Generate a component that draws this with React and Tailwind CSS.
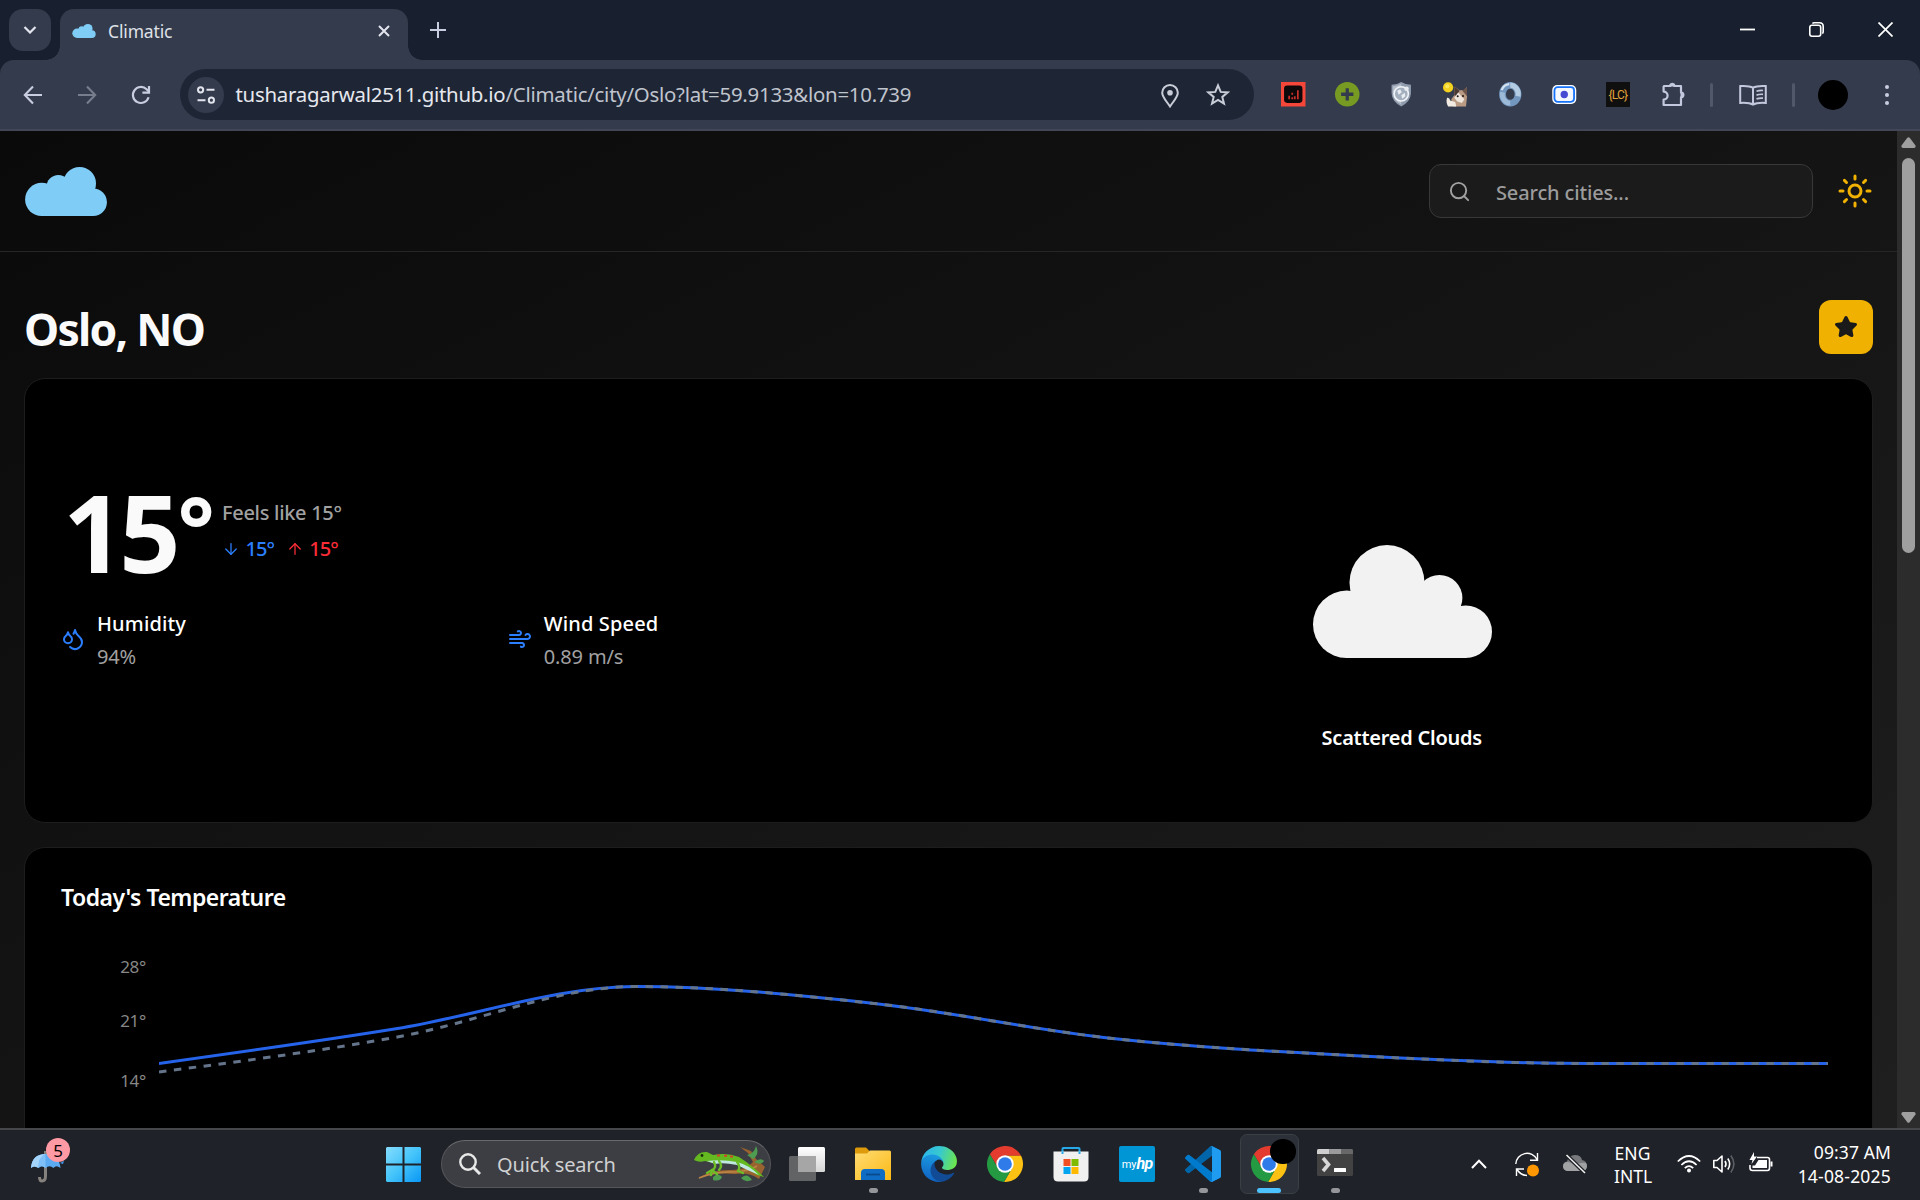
import React from "react";
import { Sun, Search, Star, Droplets, Wind, ArrowDown, ArrowUp } from "lucide-react";

/* ---------- shared drawings ---------- */

function LogoCloud({ className }) {
  return (
    <svg viewBox="0 0 82 49" className={className} fill="#7fcdf7">
      <circle cx="16.7" cy="32.4" r="16.6" />
      <circle cx="33.4" cy="20" r="12" />
      <circle cx="54.6" cy="16.4" r="16.4" />
      <circle cx="68.2" cy="35.3" r="13.7" />
      <rect x="16.7" y="20" width="51.5" height="29" />
    </svg>
  );
}

function ScatteredCloud() {
  return (
    <svg viewBox="0 0 179 113" className="ml-0.5 h-[113px] w-[179px]" fill="#f2f2f2">
      <circle cx="33.7" cy="79.3" r="33.7" />
      <circle cx="74" cy="37.6" r="37.5" />
      <circle cx="126.4" cy="53" r="23" />
      <circle cx="152.7" cy="86.7" r="26.3" />
      <rect x="33.7" y="47" width="90" height="66" />
      <rect x="33.7" y="61" width="119" height="52" />
    </svg>
  );
}

function ChromeLogo({ className }) {
  const wedge = "M24 14 H43.6 A22 22 0 0 0 5.55 12 L15.34 29 A10 10 0 0 1 24 14 Z";
  return (
    <svg viewBox="2 2 44 44" className={className}>
      <path d={wedge} fill="#e33b2e" />
      <path d={wedge} fill="#fdc113" transform="rotate(120 24 24)" />
      <path d={wedge} fill="#249a42" transform="rotate(240 24 24)" />
      <circle cx="24" cy="24" r="10.6" fill="#fff" />
      <circle cx="24" cy="24" r="8.4" fill="#2f7bea" />
    </svg>
  );
}

/* ---------- browser window ---------- */

function TabStrip() {
  return (
    <div className="flex h-[60px] shrink-0 items-start bg-[#18202f] pt-[9px]">
      <div className="ml-[9px] flex h-[42px] w-[42px] items-center justify-center rounded-[14px] bg-[#343b4c]">
        <svg viewBox="0 0 14 8" className="h-2 w-3.5" fill="none" stroke="#e3e5ee" strokeWidth="2.2">
          <path d="M1.5 1 L7 6.5 L12.5 1" />
        </svg>
      </div>
      <div className="relative ml-[9px] flex h-[51px] w-[348px] items-center rounded-t-[14px] bg-[#343b4c] pb-[8px] pl-3">
        <span className="absolute bottom-0 -left-[14px] h-[14px] w-[14px] bg-[radial-gradient(circle_at_0_0,transparent_13.5px,#343b4c_14px)]" />
        <span className="absolute bottom-0 -right-[14px] h-[14px] w-[14px] bg-[radial-gradient(circle_at_100%_0,transparent_13.5px,#343b4c_14px)]" />
        <LogoCloud className="h-[14px] w-6" />
        <span className="ml-3 text-[17.5px] leading-6 tracking-[-0.15px] text-[#dfe1e8]">Climatic</span>
        <svg viewBox="0 0 12 12" className="mr-[18px] ml-auto h-3 w-3" fill="none" stroke="#e3e5ee" strokeWidth="2">
          <path d="M1 1 L11 11 M11 1 L1 11" />
        </svg>
      </div>
      <svg viewBox="0 0 16 16" className="mt-[13px] ml-[22px] h-4 w-4" fill="none" stroke="#c9cde0" strokeWidth="2">
        <path d="M8 0 V16 M0 8 H16" />
      </svg>
      <div className="mt-[13px] mr-[27px] ml-auto flex items-center gap-[54px]">
        <svg viewBox="0 0 15 15" className="h-[15px] w-[15px]" stroke="#fff" strokeWidth="1.8">
          <path d="M0 7.5 H15" />
        </svg>
        <svg viewBox="0 0 15 15" className="h-[15px] w-[15px]" fill="none" stroke="#fff" strokeWidth="1.6">
          <rect x="0.8" y="3.3" width="10.9" height="10.9" rx="2.2" />
          <path d="M3.4 1.5 Q4 0.8 5.4 0.8 H10.5 Q14.2 0.8 14.2 4.5 V9.6 Q14.2 11 13.4 11.6" />
        </svg>
        <svg viewBox="0 0 15 15" className="h-[15px] w-[15px]" stroke="#fff" strokeWidth="1.7">
          <path d="M0.5 0.5 L14.5 14.5 M14.5 0.5 L0.5 14.5" />
        </svg>
      </div>
    </div>
  );
}

function Extensions() {
  return (
    <div className="ml-[27px] flex items-center gap-[29.6px]">
      <svg viewBox="0 0 24 24" className="h-[24.5px] w-[24.5px]">
        <rect width="24" height="24" fill="#f4473a" />
        <rect x="3" y="3.5" width="18" height="17" rx="3" fill="#0d0809" />
        <path d="M8 17 V13.5 M11 17 V15 M11 12.5 V10.5 M13.5 17 V14 M16.5 17 V8" stroke="#c9312c" strokeWidth="1.7" />
      </svg>
      <svg viewBox="0 0 24 24" className="h-[24.5px] w-[24.5px]">
        <circle cx="12" cy="12" r="12" fill="#779b22" />
        <path d="M12 6 V18 M6 12 H18" stroke="#343b4c" strokeWidth="3.2" />
      </svg>
      <svg viewBox="0 0 24 24" className="h-[24.5px] w-[24.5px]">
        <path d="M12 0 Q16 2.6 21.5 2.8 V11 Q21.2 19 12 24 Q2.8 19 2.5 11 V2.8 Q8 2.6 12 0 Z" fill="#8f9bad" />
        <path d="M12 1.6 Q7.6 4 3.8 4.1 V11 Q4.2 18 12 22.4 Z" fill="#b4bdc9" />
        <circle cx="12" cy="11.6" r="7" fill="#a4afbd" stroke="#f2f5f8" strokeWidth="1.5" />
        <path d="M8 8.5 L11 7 L12.5 10 L9.5 12.5 Z M12 13 L15.5 10.5 L16 14 L13 16.5 Z" fill="#e9edf2" />
        <circle cx="17.2" cy="6.6" r="2.2" fill="#e9edf2" />
      </svg>
      <svg viewBox="0 0 24 24" className="h-[24.5px] w-[24.5px]">
        <path d="M10 24 L8 17 L11 13 L11.5 4.5 L16 8 L20.5 8 L23.5 5 V15 L22.5 24 Z" fill="#b99a83" />
        <path d="M11 13 L11.5 4.5 L16 8.5 L14.5 14 Z" fill="#4b3a33" />
        <path d="M19 8.5 L23.5 5 V14 Z" fill="#6d5548" />
        <path d="M15 10 L18 14 L21 17 L18.5 20.5 L14 19 L11 15.5 Z" fill="#efe6de" />
        <path d="M5 24 Q2.5 20 4 15.5 Q6.5 15 7 18 L12 19.5 L13 24 Z" fill="#f1ebe4" />
        <circle cx="14.4" cy="14" r="1" fill="#1b1411" />
        <circle cx="19.6" cy="13.8" r="1" fill="#1b1411" />
        <circle cx="5" cy="5.3" r="5" fill="#f4d21f" />
        <circle cx="4.2" cy="4.2" r="2" fill="#fbe85c" />
      </svg>
      <svg viewBox="0 0 24 24" className="ml-px h-[24.5px] w-[24.5px]" fill="none">
        <ellipse cx="12" cy="12" rx="7.6" ry="8.8" stroke="#7396bf" strokeWidth="6.6" />
        <path d="M12 3.2 A7.6 8.8 0 0 1 19.6 14" stroke="#b3cce4" strokeWidth="5" />
        <path d="M12 20.8 A7.6 8.8 0 0 1 4.400 10" stroke="#9dbbd9" strokeWidth="4.6" />
        <path d="M3.6 8 A8.8 8.8 0 0 1 11 2" stroke="#d3e2f0" strokeWidth="2.2" />
      </svg>
      <svg viewBox="0 0 24 19" className="h-[19px] w-[24.5px]">
        <rect width="24" height="19" rx="5" fill="#fff" />
        <rect x="2.2" y="2.2" width="19.6" height="14.6" rx="3.2" fill="#f5f8ff" stroke="#1672f8" strokeWidth="1.8" />
        <circle cx="12" cy="9.5" r="3.7" fill="#474bd3" />
      </svg>
      <div className="-ml-px flex h-[24.5px] w-[24.5px] items-center justify-center bg-[#100f10] font-['Roboto'] text-[12px] leading-none tracking-[-0.8px] text-[#e0a23a]">
        {"{LC}"}
      </div>
      <svg viewBox="0 0 25 25" className="ml-px h-[25px] w-[25px]" fill="none" stroke="#c3c8de" strokeWidth="2.2" strokeLinejoin="round">
        <path d="M3 4 H9.2 A2.3 2.3 0 0 1 13.4 4 H20 V10.6 A2.4 2.4 0 0 1 20 15.4 V23 H2.6 V17.6 A3.6 3.6 0 0 0 2.6 9.6 V4.8 Z" />
        <path d="M9 3.5 A2.4 2.4 0 0 1 13.6 3.5 Z M20.6 10.8 A2.4 2.4 0 0 1 20.6 15.2 Z" fill="#c3c8de" />
      </svg>
    </div>
  );
}

function Toolbar() {
  return (
    <div className="shrink-0 bg-[#18202f]">
      <div className="flex h-[71px] items-center rounded-t-[14px] border-b-2 border-[#414757] bg-[#343b4c]">
        <svg viewBox="0 0 20 20" className="ml-[23px] h-5 w-5" fill="none" stroke="#c9cde0" strokeWidth="2.1">
          <path d="M19 10 H2 M10 1.5 L1.8 10 L10 18.5" />
        </svg>
        <svg viewBox="0 0 20 20" className="ml-[34px] h-5 w-5" fill="none" stroke="#777d8c" strokeWidth="2.1">
          <path d="M1 10 H18 M10 1.5 L18.2 10 L10 18.5" />
        </svg>
        <svg viewBox="0 0 20 20" className="ml-[34px] h-5 w-5" fill="none" stroke="#c9cde0" strokeWidth="2.2">
          <path d="M17.6 12.3 A8 8 0 1 1 15.6 4.3 L18 6.8" />
          <path d="M18 1 V7.6 H11.4" />
        </svg>
        <div className="ml-[29px] flex h-[51px] w-[1074px] items-center rounded-full bg-[#1e2636] pl-[8px]">
          <div className="flex h-9 w-9 items-center justify-center rounded-full bg-[#343b4c]">
            <svg viewBox="0 0 18 18" className="h-[18px] w-[18px]" fill="none" stroke="#e3e5ee" strokeWidth="2">
              <circle cx="3.6" cy="3.8" r="2.6" />
              <path d="M9.5 3.8 H17.5 M0.5 14.2 H8.5" />
              <circle cx="14.4" cy="14.2" r="2.6" />
            </svg>
          </div>
          <span className="mb-0.5 ml-[11.5px] text-[20.4px] leading-7 tracking-[-0.24px] whitespace-nowrap text-[#c0c4cd]">
            <span className="text-[#e6e8ee]">tusharagarwal2511.github.io</span>/Climatic/city/Oslo?lat=59.9133&amp;lon=10.739
          </span>
          <svg viewBox="0 0 18 24" className="mt-0.5 ml-auto h-6 w-[18px]" fill="none" stroke="#c9cdd8" strokeWidth="2">
            <path d="M9 22.5 C5 16.5 1.2 13 1.2 8.8 A7.8 7.8 0 0 1 16.8 8.8 C16.8 13 13 16.5 9 22.5 Z" />
            <circle cx="9" cy="8.8" r="2.8" fill="#c9cdd8" stroke="none" />
          </svg>
          <svg viewBox="0 0 24 23" className="mr-[24px] ml-[27px] h-[23px] w-6" fill="none" stroke="#c9cdd8" strokeWidth="2">
            <path d="M12 2.4 L14.7 8.9 L21.6 9.4 L16.3 13.9 L18 20.7 L12 17 L6 20.7 L7.7 13.9 L2.4 9.4 L9.3 8.9 Z" />
          </svg>
        </div>
        <Extensions />
        <span className="ml-[24.5px] h-6 w-[3px] rounded bg-[#50586a]" />
        <svg viewBox="0 0 28 21" className="ml-[26px] h-[22px] w-7" fill="none" stroke="#c3c8de" strokeWidth="2">
          <path d="M14 3.2 Q10 1 1.2 1.6 V18.4 Q10 17.8 14 20 Q18 17.8 26.8 18.4 V1.6 Q18 1 14 3.2 V20" />
          <path d="M17.5 6.8 Q20 5.8 24 6 M17.5 10.6 Q20 9.6 24 9.8 M17.5 14.4 Q20 13.4 24 13.6" strokeWidth="1.7" />
        </svg>
        <span className="ml-[25px] h-6 w-[3px] rounded bg-[#50586a]" />
        <span className="ml-[23px] h-[30px] w-[30px] rounded-full bg-black" />
        <div className="ml-[37px] flex flex-col gap-1">
          <span className="h-1 w-1 rounded-full bg-[#c9cde0]" />
          <span className="h-1 w-1 rounded-full bg-[#c9cde0]" />
          <span className="h-1 w-1 rounded-full bg-[#c9cde0]" />
        </div>
      </div>
    </div>
  );
}

/* ---------- weather page ---------- */

function PageHeader() {
  return (
    <header className="flex h-[121px] shrink-0 items-center border-b border-[#262626] px-[25px]">
      <LogoCloud className="h-[49px] w-[82px]" />
      <div className="ml-auto flex h-[54px] w-[384px] items-center rounded-[12px] border border-[#383838] bg-[#1b1b1b] pl-[18px]">
        <Search className="h-[23px] w-[23px]" color="#a1a1a1" strokeWidth={2} />
        <span className="mt-[3px] ml-[25px] text-[20px] leading-7 font-medium tracking-[-0.15px] text-[#9c9c9c]">Search cities...</span>
      </div>
      <Sun className="mr-[-1px] ml-6 h-9 w-9" color="#f0b100" strokeWidth={2} />
    </header>
  );
}

function Metric({ icon, name, value }) {
  return (
    <div className="flex items-center gap-[12px]">
      {icon}
      <div className="flex flex-col pt-px text-[20px] leading-[33px]">
        <span className="font-medium tracking-[0.15px] text-white">{name}</span>
        <span className="tracking-[-0.15px] text-[#a1a1a1]">{value}</span>
      </div>
    </div>
  );
}

function CurrentWeather() {
  return (
    <section className="mt-6 grid h-[445px] shrink-0 grid-cols-2 gap-9 rounded-[21px] border border-[#1d1d1d] bg-black px-9">
      <div className="pt-[99px]">
        <div className="flex h-[108px] items-center">
          <div className="flex w-[160px] items-start pl-[2px] font-bold text-[#fafafa]">
            <span className="text-[107px] leading-[108px] tracking-[-5px]">15</span>
            <span className="mt-[2px] ml-[2px] text-[88px] leading-[94px]">°</span>
          </div>
          <div className="mb-[3px] ml-px flex flex-col gap-1.5 text-[20px] leading-[30px] font-medium">
            <span className="tracking-[-0.3px] text-[#a1a1a1]">Feels like 15°</span>
            <span className="flex gap-3 tracking-[-0.9px]">
              <span className="flex items-center gap-[5.5px] text-[#2b7fff]">
                <ArrowDown className="h-[18px] w-[18px]" strokeWidth={1.7} />
                15°
              </span>
              <span className="flex items-center gap-[5px] text-[#fb2c36]">
                <ArrowUp className="h-[18px] w-[18px]" strokeWidth={1.7} />
                15°
              </span>
            </span>
          </div>
        </div>
        <div className="mt-[20px] grid grid-cols-2 gap-6">
          <Metric icon={<Droplets className="mb-0.5 h-6 w-6" color="#2b7fff" />} name="Humidity" value="94%" />
          <Metric icon={<Wind className="mb-0.5 h-6 w-6" color="#2b7fff" />} name="Wind Speed" value="0.89 m/s" />
        </div>
      </div>
      <div className="flex flex-col items-center pt-[166px]">
        <ScatteredCloud />
        <span className="mt-[65px] ml-px text-[20px] leading-[30px] font-semibold tracking-[-0.25px] text-white">Scattered Clouds</span>
      </div>
    </section>
  );
}

/* Monotone cubic interpolation through evenly spaced samples. */
function monotonePath(ys, step) {
  const n = ys.length;
  const d = ys.slice(1).map((y, i) => (y - ys[i]) / step);
  const m = ys.map((_, i) => {
    if (i === 0 || i === n - 1) return 0;
    const a = d[i - 1];
    const b = d[i];
    return (Math.sign(a) + Math.sign(b)) * Math.min(Math.abs(a), Math.abs(b), 0.25 * Math.abs(a + b)) || 0;
  });
  m[0] = (3 * d[0] - m[1]) / 2;
  m[n - 1] = (3 * d[n - 2] - m[n - 2]) / 2;
  let path = `M0 ${ys[0]}`;
  for (let i = 0; i < n - 1; i++) {
    const x0 = i * step;
    const k = step / 3;
    path += ` C${x0 + k} ${ys[i] + k * m[i]} ${x0 + 2 * k} ${ys[i + 1] - k * m[i + 1]} ${x0 + step} ${ys[i + 1]}`;
  }
  return path;
}

const STEP = 1669 / 7;
const TEMPERATURE = [103.5, 68.5, 26.5, 43.5, 78.5, 95.5, 103.5, 103.5];
const FEELS_LIKE = [112, 77, 26.5, 43.5, 78.5, 95.5, 103.5, 103.5];

function TemperatureChart() {
  return (
    <section className="mt-[24px] h-[420px] shrink-0 rounded-[21px] border border-[#1d1d1d] bg-black pt-[33px] pl-9">
      <h2 className="text-[23px] leading-[32px] font-semibold tracking-[-0.5px] text-white">Today's Temperature</h2>
      <div className="mt-[39px] flex">
        <div className="w-[86px] pr-px text-right text-[17px] leading-[24px] tracking-[-0.3px] text-[#878787]">
          <div className="mt-[3px]">28°</div>
          <div className="mt-[30px]">21°</div>
          <div className="mt-[36px]">14°</div>
        </div>
        <svg viewBox="0 0 1669 180" className="mt-[8px] ml-[11.5px] h-[180px] w-[1669px]" fill="none" strokeWidth="3">
          <path d={monotonePath(TEMPERATURE, STEP)} stroke="#2563eb" />
          <path d={monotonePath(FEELS_LIKE, STEP)} stroke="#64748b" strokeDasharray="7.5 7.5" />
        </svg>
      </div>
    </section>
  );
}

function Scrollbar() {
  return (
    <div className="flex w-[23px] shrink-0 flex-col items-center bg-[#2c2c2c]">
      <svg viewBox="0 0 15 11" className="mt-1.5 h-[11px] w-[15px]" fill="#9f9f9f">
        <path d="M6.3 0.8 Q7.5 -0.4 8.7 0.8 L14.5 8.6 Q15 10.8 13 11 H2 Q0 10.8 0.5 8.6 Z" />
      </svg>
      <div className="mt-[10px] h-[395px] w-[13px] rounded-full bg-[#9f9f9f]" />
      <svg viewBox="0 0 15 11" className="mt-auto mb-[5px] h-[11px] w-[15px]" fill="#9f9f9f">
        <path d="M6.3 10.2 Q7.5 11.4 8.7 10.2 L14.5 2.4 Q15 0.2 13 0 H2 Q0 0.2 0.5 2.4 Z" />
      </svg>
    </div>
  );
}

function WeatherPage() {
  return (
    <div className="flex h-[997px] shrink-0">
      <div className="flex flex-1 flex-col overflow-hidden bg-linear-to-br from-[#0a0a0a] to-[#1f1f1f]">
        <PageHeader />
        <main className="flex flex-1 flex-col overflow-hidden px-6 pt-12">
          <div className="flex h-[54px] shrink-0 items-center justify-between">
            <h1 className="pt-[4px] text-[44.5px] leading-[54px] font-bold tracking-[-1.75px] text-[#fafafa]">Oslo, NO</h1>
            <div className="flex h-[54px] w-[54px] items-center justify-center rounded-[12px] bg-[#f0b100]">
              <Star className="h-6 w-6" color="#1a1a1a" fill="#1a1a1a" />
            </div>
          </div>
          <CurrentWeather />
          <TemperatureChart />
        </main>
      </div>
      <Scrollbar />
    </div>
  );
}

/* ---------- taskbar ---------- */

function Weather() {
  return (
    <div className="relative mb-0.5 ml-[29px] h-[44px] w-[48px]">
      <svg viewBox="0 0 48 44" className="h-[44px] w-[48px]">
        <path d="M16.5 10 V35 Q16.5 40 13 40 Q10.5 40 10.5 36" fill="none" stroke="#85817d" strokeWidth="3" />
        <path d="M2 27 Q3 13 16.5 13 Q30 13 31.5 27 Q27 23.5 24.5 27 Q20.5 23.5 16.5 27 Q12.5 23.5 9.5 27 Q5 24 2 27 Z" fill="#5cabf2" />
        <path d="M2 27 Q3 13 16.5 13 Q9 17 9.5 27 Q5 24 2 27 Z" fill="#a5d4fb" />
        <path d="M9.5 27 Q9 17 16.5 13 V27 Q12.5 23.5 9.5 27 Z" fill="#7fc0f8" />
        <path d="M31 22 L35 20 L34 23 Z" fill="#3f9bf0" />
      </svg>
      <span className="absolute -top-[3px] left-[17px] flex h-6 w-6 items-center justify-center rounded-full bg-[#ff99a4] text-[17px] leading-none text-black">
        5
      </span>
    </div>
  );
}

function Lizard() {
  return (
    <svg viewBox="0 0 74 36" className="h-9 w-[74px]">
      <path d="M4 33 Q18 23 40 24 Q54 23 60 16 L55 7 L47 1 L58 5 L63 13 L72 21 L66 33 Q56 26 42 28 Q18 26 4 33 Z" fill="#99632f" />
      <path d="M6 32 Q22 25 42 26 Q56 25 64 20" fill="none" stroke="#bd8445" strokeWidth="1.6" />
      <path d="M54 9 Q61 8 63 0 Q67 8 60 13 Z M61 16 Q68 11 71 15 Q68 20 61 16 Z M20 31 Q25 26 29 31 Q27 36 20 34 Z M48 32 Q54 26 59 34 Q52 37 48 32 Z" fill="#4d9c50" />
      <path d="M1 14 Q5 5 14 6 L20 9 Q34 6 46 11 Q54 16 61 22 Q67 27 71 31 L64 29 Q54 22 45 18 Q32 15 20 17 L12 15 Q6 17 1 14 Z" fill="#63b91f" />
      <path d="M14 15 Q30 13 44 16 Q56 19 66 29 Q52 23 44 19 Q30 16 22 18 Z" fill="#bfe8e0" />
      <path d="M21 16 Q24 22 19 24 L14 27 M19 24 L18 29 M19 24 L24 28 M26 15 Q30 20 26 24 M44 16 Q48 21 45 25 M45 25 L50 27" fill="none" stroke="#6cbd27" strokeWidth="2.4" strokeLinecap="round" />
      <path d="M24 9.5 h3 M31 9.8 h3 M37 10.5 h3" stroke="#d1452a" strokeWidth="2" />
      <circle cx="9" cy="9.5" r="1.4" fill="#18300c" />
    </svg>
  );
}

function AppSlot({ children, running, active }) {
  return (
    <div
      className={
        active
          ? "relative mx-[3.5px] flex h-[60px] w-[59px] flex-col items-center rounded-[7px] border border-[#3a3e45] bg-[#2c3038] pt-[11px]"
          : "relative mx-[3.5px] flex h-[60px] w-[59px] flex-col items-center pt-[12px]"
      }
    >
      <div className="flex h-9 items-center">{children}</div>
      {running && <span className="mt-[6px] h-[5px] w-[9px] rounded-full bg-[#94969a]" />}
      {active && <span className="mt-[6px] h-[5px] w-6 rounded-full bg-[#4cc2ff]" />}
      {active && <span className="absolute top-[4px] left-[29px] h-[25px] w-[26px] rounded-[48%] bg-black" />}
    </div>
  );
}

function TaskbarApps() {
  return (
    <div className="ml-[3px] flex">
      <AppSlot>
        <svg viewBox="0 0 36 34" className="h-[34px] w-9">
          <defs>
            <linearGradient id="tvFront" x1="0" y1="0" x2="0" y2="1">
              <stop offset="0" stopColor="#fff" />
              <stop offset="1" stopColor="#d6d6d6" />
            </linearGradient>
          </defs>
          <rect x="0" y="9" width="27" height="25" rx="1.5" fill="#626365" />
          <rect x="9" y="0" width="27" height="25" rx="1.5" fill="url(#tvFront)" />
          <path d="M9 9 H27 V25 H9 Z" fill="#a6a6a7" />
        </svg>
      </AppSlot>
      <AppSlot running>
        <svg viewBox="0 0 36 34" className="h-[34px] w-9">
          <defs>
            <linearGradient id="folder" x1="0" y1="0" x2="1" y2="1">
              <stop offset="0" stopColor="#ffdc73" />
              <stop offset="1" stopColor="#fbb916" />
            </linearGradient>
          </defs>
          <path d="M0 2 Q0 0.5 1.5 0.5 H11 L15 4.5 V9 H0 Z" fill="#dd9a0b" />
          <path d="M0 6.5 H12 L15 3.5 H34.5 Q36 3.5 36 5 V33 H0 Z" fill="url(#folder)" />
          <path d="M6 33 V26 Q6 22 10 22 H26 Q30 22 30 26 V33 Z" fill="#0f6cc4" />
          <path d="M11 27.5 H25" stroke="#0a4a8c" strokeWidth="1.8" />
        </svg>
      </AppSlot>
      <AppSlot>
        <svg viewBox="4 4 257 257" className="h-9 w-9">
          <defs>
            <linearGradient id="edgeGreen" x1="0" y1="0.3" x2="1" y2="0.5">
              <stop offset="0" stopColor="#2cb5ec" />
              <stop offset="0.5" stopColor="#38c8cf" />
              <stop offset="1" stopColor="#6be64f" />
            </linearGradient>
            <linearGradient id="edgeBlue" x1="0.5" y1="0" x2="0.3" y2="1">
              <stop offset="0" stopColor="#1b9de2" />
              <stop offset="1" stopColor="#0f5fc0" />
            </linearGradient>
          </defs>
          <path fill="#114a95" d="M235.68 195.46a93.73 93.73 0 0 1-10.54 4.71 101.87 101.87 0 0 1-35.9 6.46c-47.32 0-88.54-32.55-88.54-74.32A31.48 31.48 0 0 1 117.13 105c-42.8 1.8-53.8 46.4-53.8 72.53 0 73.88 68.09 81.37 82.76 81.37 7.91 0 19.84-2.3 27-4.56l1.31-.44a128.34 128.34 0 0 0 66.6-52.8 4 4 0 0 0-5.32-5.64z" />
          <path fill="url(#edgeBlue)" d="M110.34 246.34A79.2 79.2 0 0 1 87.6 225a80.72 80.72 0 0 1 29.53-120c3.12-1.47 8.45-4.13 15.54-4a32.35 32.35 0 0 1 25.69 13 31.88 31.88 0 0 1 6.36 18.66c0-.21 24.46-79.6-80-79.6-43.9 0-80 41.66-80 78.21a130.15 130.15 0 0 0 12.11 56 128 128 0 0 0 156.38 67.11 75.55 75.55 0 0 1-62.78-8z" />
          <path fill="url(#edgeGreen)" d="M156.94 153.78c-.81 1.05-3.3 2.5-3.3 5.66 0 2.61 1.7 5.12 4.72 7.23 14.38 10 41.49 8.68 41.56 8.68a59.56 59.56 0 0 0 30.27-8.35 61.38 61.38 0 0 0 30.43-52.88c.26-22.41-8-37.31-11.34-43.91C228.09 28.76 182.35 4.8 132.61 4.8a128 128 0 0 0-128 126.2c.48-36.54 36.8-66.05 80-66.05 3.5 0 23.46.34 42 10.07 16.34 8.58 24.9 18.94 30.85 29.21 6.18 10.67 7.28 24.15 7.28 29.52s-2.74 13.33-7.8 19.9z" />
        </svg>
      </AppSlot>
      <AppSlot>
        <ChromeLogo className="h-9 w-9" />
      </AppSlot>
      <AppSlot>
        <svg viewBox="0 0 36 36" className="h-9 w-9">
          <path d="M9.5 8 V2.8 Q9.5 2 10.3 2 H25.7 Q26.5 2 26.5 2.8 V8" fill="none" stroke="#27a9e8" strokeWidth="2" />
          <path d="M0.5 5.5 H35.5 V31 Q35.5 35.5 31 35.5 H5 Q0.5 35.5 0.5 31 Z" fill="#f0f0f0" />
          <path d="M9.5 5.5 V8 M26.5 5.5 V8" stroke="#27a9e8" strokeWidth="2" />
          <rect x="10.5" y="13" width="7" height="7" fill="#f25022" />
          <rect x="18.5" y="13" width="7" height="7" fill="#7fba00" />
          <rect x="10.5" y="21" width="7" height="7" fill="#00a4ef" />
          <rect x="18.5" y="21" width="7" height="7" fill="#ffb900" />
        </svg>
      </AppSlot>
      <AppSlot>
        <div className="flex h-9 w-9 items-center justify-center rounded-[2px] bg-[#0096d6] leading-none text-white">
          <span className="font-['Roboto'] text-[11px]">my</span>
          <span className="font-['Roboto'] text-[16px] font-bold tracking-[-0.8px] italic">hp</span>
        </div>
      </AppSlot>
      <AppSlot running>
        <svg viewBox="0 0 100 100" className="h-9 w-9">
          <path fill="#0065A9" d="M96.4614 10.7962L75.8569 0.875542C73.4719 -0.272773 70.6217 0.211611 68.75 2.08333L1.29858 63.5832C-0.515693 65.2373 -0.513607 68.0937 1.30308 69.7452L6.81272 74.754C8.29793 76.1042 10.5347 76.2036 12.1338 74.9905L93.3609 13.3699C96.086 11.3026 100 13.2462 100 16.6667V16.4275C100 14.0265 98.6246 11.8378 96.4614 10.7962Z" />
          <path fill="#007ACC" d="M96.4614 89.2038L75.8569 99.1245C73.4719 100.273 70.6217 99.7884 68.75 97.9167L1.29858 36.4169C-0.515693 34.7627 -0.513607 31.9063 1.30308 30.2548L6.81272 25.246C8.29793 23.8958 10.5347 23.7964 12.1338 25.0095L93.3609 86.6301C96.086 88.6974 100 86.7538 100 83.3333V83.5725C100 85.9735 98.6246 88.1622 96.4614 89.2038Z" />
          <path fill="#1F9CF0" d="M75.8578 99.1263C73.4721 100.274 70.6219 99.7885 68.75 97.9166C71.0564 100.223 75 98.5895 75 95.3278V4.67213C75 1.41039 71.0564 -0.223106 68.75 2.08329C70.6219 0.211402 73.4721 -0.273666 75.8578 0.873633L96.4587 10.7807C98.6234 11.8217 100 14.0112 100 16.4132V83.5871C100 85.9891 98.6234 88.1786 96.4586 89.2196L75.8578 99.1263Z" />
        </svg>
      </AppSlot>
      <AppSlot active>
        <ChromeLogo className="h-9 w-9" />
      </AppSlot>
      <AppSlot running>
        <svg viewBox="0 0 36 27" className="mb-1 h-[27px] w-9">
          <rect width="36" height="27" rx="1.5" fill="#424242" />
          <path d="M0 5 V1.5 Q0 0 1.5 0 H12.5 V5 Z" fill="#cfcfcf" />
          <rect x="12.5" y="0" width="11.5" height="5" fill="#9b9b9b" />
          <path d="M24 0 H34.5 Q36 0 36 1.5 V5 H24 Z" fill="#686868" />
          <path d="M6 9 L11.5 15.5 L6 22" fill="none" stroke="#d6d6d6" strokeWidth="3.6" />
          <rect x="17" y="19" width="12" height="4" rx="0.5" fill="#fff" />
        </svg>
      </AppSlot>
    </div>
  );
}

function Tray() {
  return (
    <div className="mr-[29px] ml-auto flex items-center text-white">
      <svg viewBox="0 0 16 10" className="h-[10px] w-4" fill="none" stroke="#fff" strokeWidth="2">
        <path d="M1 9 L8 1.8 L15 9" />
      </svg>
      <svg viewBox="0 0 24 25" className="ml-[28px] h-[25px] w-6" fill="none" stroke="#fff" strokeWidth="1.4">
        <path d="M0.8 12 A11.2 11.2 0 0 1 22 7.5 M22.5 1 V8.3 H15" />
        <path d="M1.5 24 V17 H9 M2 17.5 Q6 23.5 12 23.5" />
        <circle cx="18" cy="18.5" r="6" fill="#ff9800" stroke="none" />
      </svg>
      <svg viewBox="0 0 24 20" className="ml-[24px] h-5 w-6">
        <path d="M4 17 Q0 16 0 12 Q0 8 4 7.5 Q6 1 12 1 Q18 1 19 6 Q24 7 24 12 Q23.5 17 19.5 17 Z" fill="#77797c" />
        <path d="M4 17 Q0 16 0 12 Q0.5 8 5 8 Q9 8 12 11 Q18 8 22.5 9 Q24 10 24 12 Q23.5 17 19.5 17 Z" fill="#a1a2a4" />
        <path d="M3.5 1 L22 19" stroke="#1f2227" strokeWidth="4" />
        <path d="M3.5 1 L22 19" stroke="#f2f2f2" strokeWidth="1.5" />
      </svg>
      <div className="ml-[27px] w-[37px] pt-px text-center text-[17.5px] leading-[23px]">
        <div>ENG</div>
        <div>INTL</div>
      </div>
      <svg viewBox="0 0 24 18" className="ml-[26px] h-[18px] w-6" fill="none" stroke="#fff" strokeWidth="1.7">
        <path d="M0.8 6.5 Q12 -4.5 23.2 6.5 M4.4 10 Q12 2.5 19.6 10 M7.8 13.2 Q12 9 16.2 13.2" />
        <circle cx="12" cy="15.5" r="2" fill="#fff" stroke="none" />
      </svg>
      <svg viewBox="0 0 24 22" className="ml-[12px] h-[22px] w-6" fill="none" stroke="#fff" strokeWidth="1.6">
        <path d="M0.8 7.5 H4 L9 3 V19 L4 14.5 H0.8 Z" strokeLinejoin="round" />
        <path d="M12 8 Q14 11 12 14 M14.8 5.5 Q18.5 11 14.8 16.5" />
        <path d="M17.8 2.5 Q24 11 17.8 19.5" stroke="#5c5f64" />
      </svg>
      <svg viewBox="0 0 24 20" className="mt-[-4px] ml-[12px] h-5 w-6" fill="none" stroke="#fff" strokeWidth="1.6">
        <path d="M8 5.5 H18.5 Q20.5 5.5 20.5 7.5 V16 Q20.5 18.5 18.5 18.5 H3.5 Q1 18.5 1 16 V13" />
        <path d="M9.5 8 H18 V16 H3.5 V13.5 H6 Z" fill="#fff" stroke="none" />
        <path d="M22.5 9.5 V14.5" strokeWidth="2" />
        <path d="M5 0 L0.5 8 H3.5 L2.5 12 L8 4.5 H5 Z" fill="#fff" stroke="none" />
      </svg>
      <div className="mb-px ml-[21px] w-[97px] text-right text-[17.5px] leading-[24px] whitespace-nowrap">
        <div className="tracking-[0.1px]">09:37 AM</div>
        <div className="tracking-[0.2px]">14-08-2025</div>
      </div>
    </div>
  );
}

function Taskbar() {
  return (
    <div className="flex h-[72px] shrink-0 items-center border-t-2 border-[#46474b] bg-[#1f2228] pb-0.5">
      <div className="w-[386px]">
        <Weather />
      </div>
      <svg viewBox="0 0 35 35" className="h-[35px] w-[35px]">
        <defs>
          <linearGradient id="winTile" x1="0" y1="0" x2="1" y2="1">
            <stop offset="0" stopColor="#86dcfd" />
            <stop offset="0.5" stopColor="#44c4fa" />
            <stop offset="1" stopColor="#0a97f5" />
          </linearGradient>
        </defs>
        <path d="M1 0 H16.5 V16.5 H0 V1 Z M18.5 0 H34 L35 1 V16.5 H18.5 Z M0 18.5 H16.5 V35 H1 L0 34 Z M18.5 18.5 H35 V34 L34 35 H18.5 Z" fill="url(#winTile)" />
      </svg>
      <div className="ml-[20px] flex h-[48px] w-[330px] items-center rounded-full border border-[#54555a] border-t-[#68696d] bg-[#3d3e43] pl-[17px]">
        <svg viewBox="0 0 22 22" className="h-[22px] w-[22px]" fill="none" stroke="#e8e8e8" strokeWidth="2.4">
          <circle cx="9" cy="9" r="7.7" />
          <path d="M14.5 14.5 L21 21" strokeWidth="3" />
        </svg>
        <span className="mt-px ml-[16px] text-[20px] leading-7 tracking-[-0.15px] text-[#cfd0d1]">Quick search</span>
        <div className="mr-[3px] ml-auto">
          <Lizard />
        </div>
      </div>
      <TaskbarApps />
      <Tray />
    </div>
  );
}

export default function App() {
  return (
    <div className="flex h-[1200px] w-[1920px] flex-col overflow-hidden bg-black font-['Noto_Sans','Open_Sans',sans-serif]">
      <TabStrip />
      <Toolbar />
      <WeatherPage />
      <Taskbar />
    </div>
  );
}
